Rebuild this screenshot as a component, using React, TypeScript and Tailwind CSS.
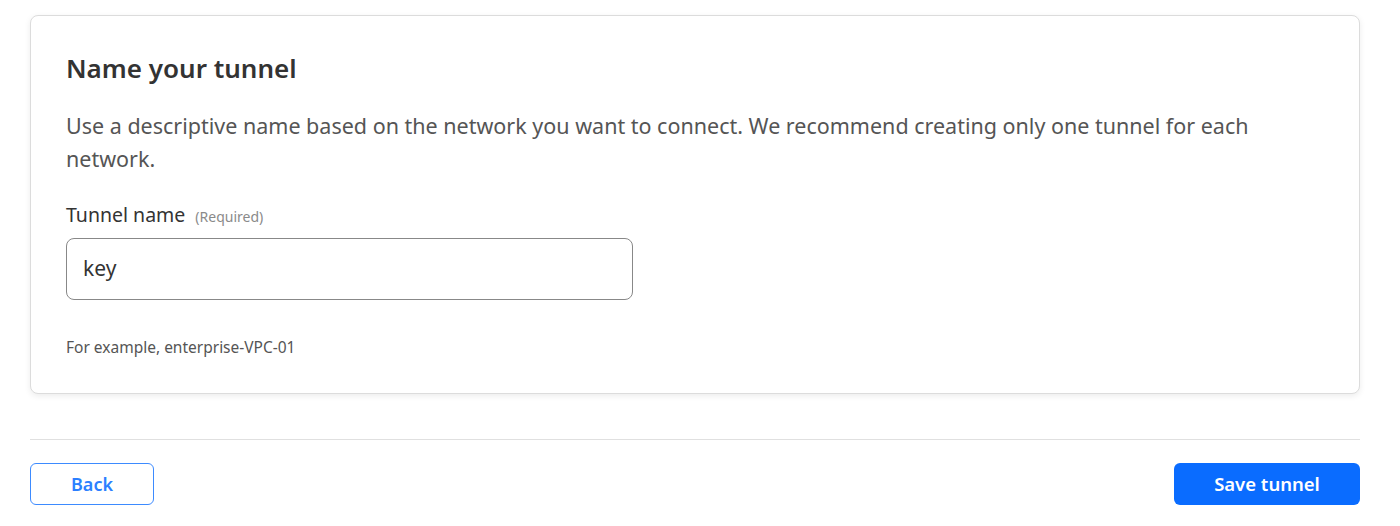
export default function App() {
  return (
    <div className="w-[1400px] h-[526px] bg-white pl-[30px] pr-[40px] pt-[15px]" style={{ fontFamily: '"Noto Sans", "Open Sans", sans-serif' }}>
      <div className="rounded-[8px] border border-[#dcdcdc] bg-white shadow-[0_2px_6px_rgba(0,0,0,0.08)] px-[35px] pt-[34px] pb-[36px]">
        <h2 className="text-[26px] leading-[36px] font-semibold text-[#333]">Name your tunnel</h2>
        <p className="mt-[23px] max-w-[1200px] text-[21.5px] leading-[33px] text-[#555]">
          Use a descriptive name based on the network you want to connect. We recommend creating only one tunnel for each network.
        </p>
        <div className="mt-[28px] flex items-baseline gap-[10px]">
          <span className="text-[19.5px] leading-[24px] text-[#333]">Tunnel name</span>
          <span className="text-[14px] leading-[24px] text-[#8a8a8a]">(Required)</span>
        </div>
        <div className="mt-[9px] w-[567px] h-[62px] rounded-[8px] border border-[#888] flex items-center px-[16px]">
          <span className="text-[21px] text-[#333]">key</span>
        </div>
        <div className="mt-[37px] text-[15.5px] leading-[20px] text-[#555]">For example, enterprise-VPC-01</div>
      </div>
      <div className="mt-[45px] border-t border-[#e0e0e0]" />
      <div className="mt-[23px] flex justify-between">
        <button className="w-[124px] h-[42px] rounded-[6px] border border-[#3d8bff] text-[#2b7fff] text-[18px] font-semibold bg-white">Back</button>
        <button className="w-[186px] h-[42px] rounded-[6px] bg-[#0a6cff] text-white text-[18.5px] font-semibold">Save tunnel</button>
      </div>
    </div>
  );
}
